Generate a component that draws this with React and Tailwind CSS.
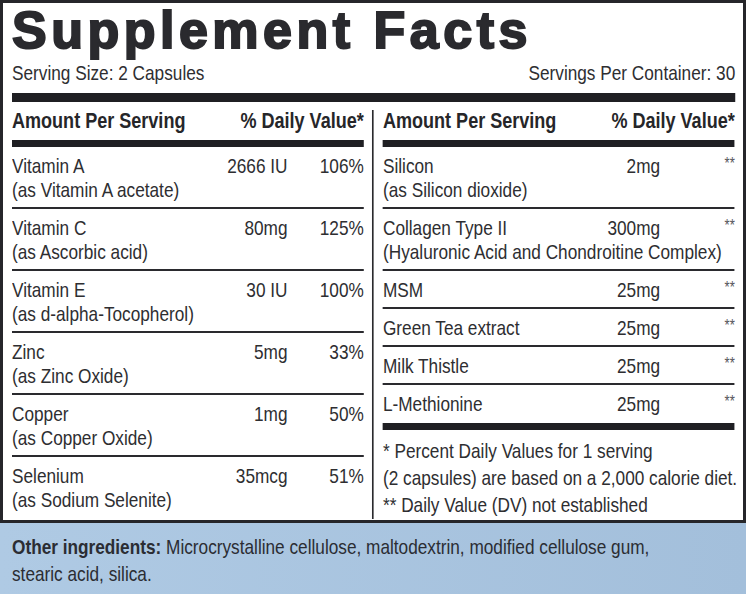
import React from "react";

// Body text is Liberation Sans squeezed horizontally (≈ Arial Narrow / DIN Condensed).
// Horizontal sizes inside the squeezed blocks are given pre-scale (target / 0.82).

const left = [
  { name: "Vitamin A", sub: "(as Vitamin A acetate)", amt: "2666 IU", dv: "106%" },
  { name: "Vitamin C", sub: "(as Ascorbic acid)", amt: "80mg", dv: "125%" },
  { name: "Vitamin E", sub: "(as d-alpha-Tocopherol)", amt: "30 IU", dv: "100%" },
  { name: "Zinc", sub: "(as Zinc Oxide)", amt: "5mg", dv: "33%" },
  { name: "Copper", sub: "(as Copper Oxide)", amt: "1mg", dv: "50%" },
  { name: "Selenium", sub: "(as Sodium Selenite)", amt: "35mcg", dv: "51%" },
];

const right = [
  { name: "Silicon", sub: "(as Silicon dioxide)", amt: "2mg" },
  { name: "Collagen Type II", sub: "(Hyaluronic Acid and Chondroitine Complex)", amt: "300mg" },
  { name: "MSM", amt: "25mg" },
  { name: "Green Tea extract", amt: "25mg" },
  { name: "Milk Thistle", amt: "25mg" },
  { name: "L-Methionine", amt: "25mg" },
];

function Header() {
  return (
    <>
      <div className="h-[30px] flex justify-between whitespace-nowrap font-bold text-[22px] leading-[22px] text-[#262629]">
        <span>Amount Per Serving</span>
        <span>% Daily Value*</span>
      </div>
      <div className="h-[7px] bg-[#1f1f23]" />
    </>
  );
}

export default function App() {
  return (
    <div className="w-[746px] h-[594px] bg-white font-['Liberation_Sans',Arial,sans-serif] text-[21px] text-[#2e2e31] overflow-hidden">
      {/* Label box */}
      <div className="h-[523px] border-[3px] border-[#26262a] pl-[9px] pr-[8px] flex flex-col">
        {/* Title */}
        <h1 className="pt-[1px] font-bold text-[52px] leading-[52px] tracking-[4.5px] text-[#2a2a2e] [-webkit-text-stroke:2px_#2a2a2e] whitespace-nowrap">
          Supplement Facts
        </h1>

        <div className="w-[882px] origin-left scale-x-[0.82] flex flex-col flex-1">
          <div className="mt-[5px] flex justify-between leading-[24px]">
            <span>Serving Size: 2 Capsules</span>
            <span>Servings Per Container: 30</span>
          </div>

          <div className="mt-[8px] h-[9px] bg-[#1f1f23]" />

          {/* Two columns */}
          <div className="flex flex-1 pt-[8px] pb-[7px]">
            <div className="w-[429px] flex flex-col">
              <Header />
              {left.map((r, i) => (
                <div
                  key={r.name}
                  className={`h-[62px] pt-[7px] leading-[24px] grid grid-cols-[1fr_auto_93px] ${
                    i < left.length - 1 ? "border-b-2 border-[#2a2a2e]" : ""
                  }`}
                >
                  <div className="whitespace-nowrap">
                    <div>{r.name}</div>
                    <div>{r.sub}</div>
                  </div>
                  <div className="text-right">{r.amt}</div>
                  <div className="text-right">{r.dv}</div>
                </div>
              ))}
            </div>

            <div className="ml-[10px] mr-[11px] w-[2.4px] bg-[#2a2a2e]" />

            <div className="w-[429px] flex flex-col">
              <Header />
              {right.map((r, i) => (
                <div
                  key={r.name}
                  className={`${r.sub ? "h-[62px]" : "h-[38px]"} pt-[7px] leading-[24px] relative ${
                    i < right.length - 1 ? "border-b-2 border-[#2a2a2e]" : ""
                  }`}
                >
                  <div className="flex whitespace-nowrap">
                    <span className="flex-1">{r.name}</span>
                    <span className="w-[100px] text-right mr-[91px]">{r.amt}</span>
                  </div>
                  {r.sub && <div className="whitespace-nowrap">{r.sub}</div>}
                  <span className="absolute right-0 top-[9px] text-[16px] leading-[16px] text-[#55555a]">**</span>
                </div>
              ))}
              <div className="h-[7px] bg-[#1f1f23]" />
              <div className="pt-[7px] leading-[27px] whitespace-nowrap">
                <div>* Percent Daily Values for 1 serving</div>
                <div>(2 capsules) are based on a 2,000 calorie diet.</div>
                <div>** Daily Value (DV) not established</div>
              </div>
            </div>
          </div>
        </div>
      </div>

      {/* Other ingredients */}
      <div className="h-[71px] bg-gradient-to-r from-[#afcae4] to-[#a3bfdb] pl-[12px] pt-[10px]">
        <div className="w-[895px] origin-left scale-x-[0.82] leading-[27px] text-[#2b2d33]">
          <span className="font-bold">Other ingredients:</span> Microcrystalline cellulose, maltodextrin, modified cellulose gum,
          <br />
          stearic acid, silica.
        </div>
      </div>
    </div>
  );
}
